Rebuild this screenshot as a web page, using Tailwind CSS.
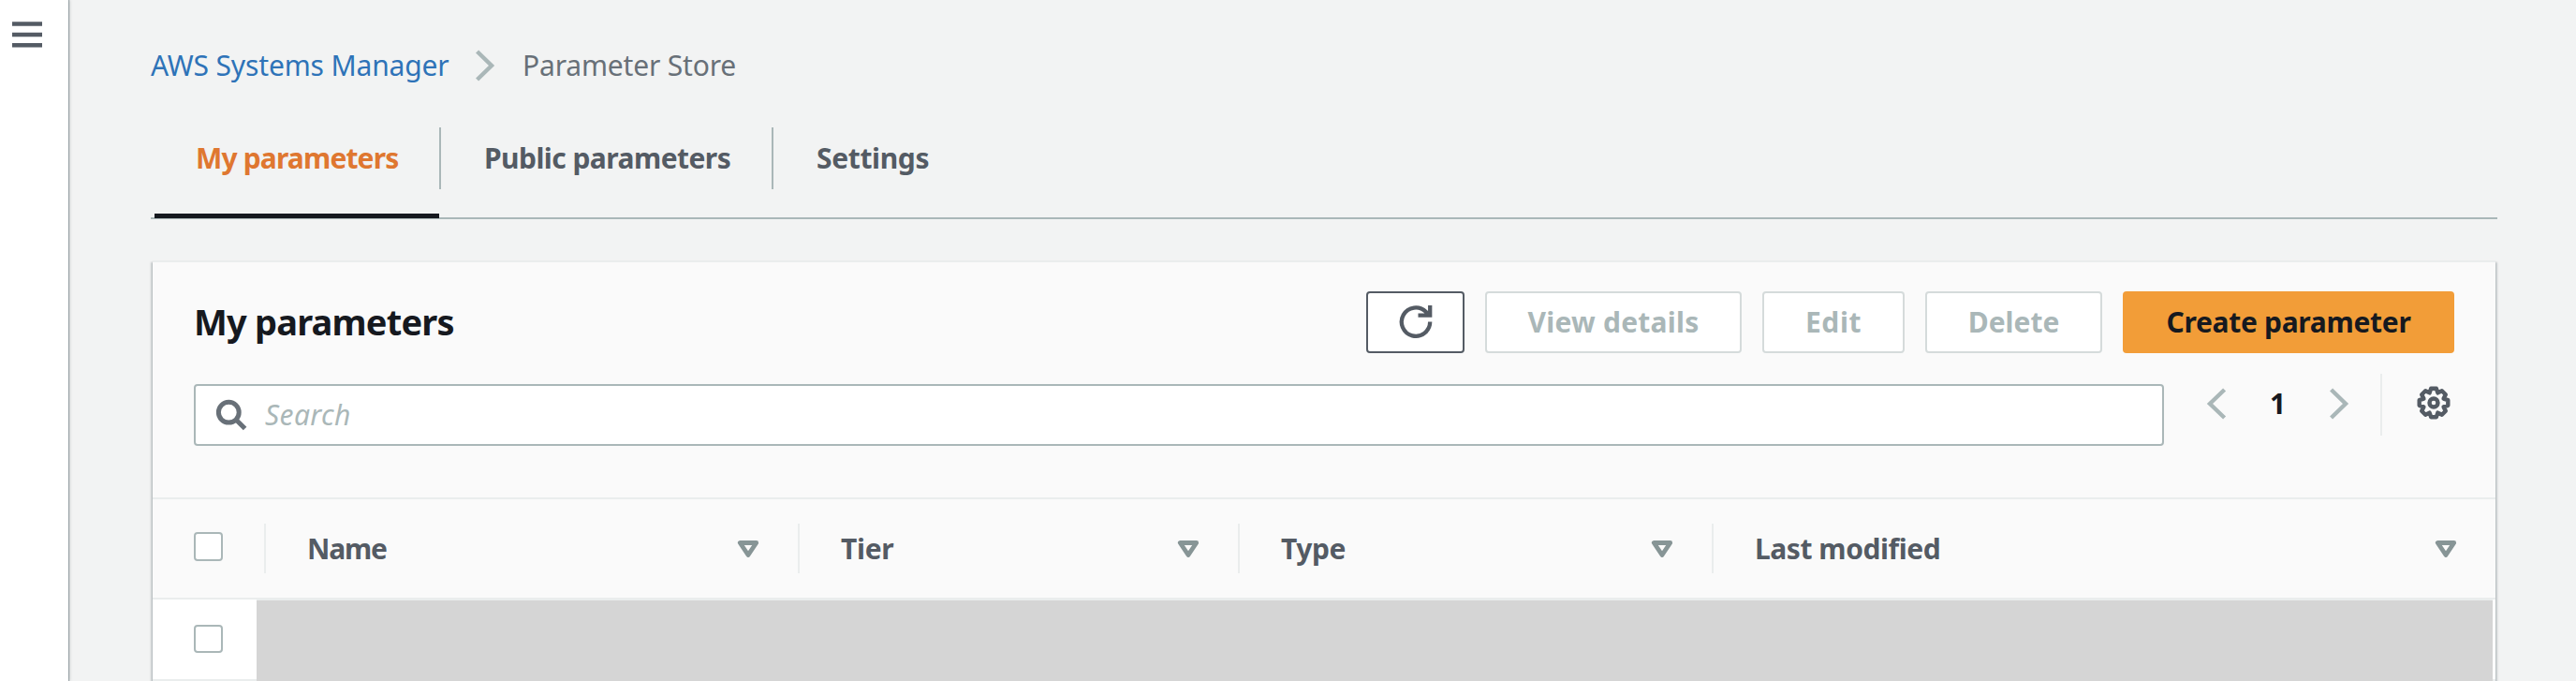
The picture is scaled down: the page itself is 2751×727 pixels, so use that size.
<!DOCTYPE html>
<html lang="en">
<head>
    <meta charset="UTF-8">
    <meta name="viewport" content="width=device-width, initial-scale=1.0">
    <title>Parameter Store</title>
    <script src="https://cdn.jsdelivr.net/npm/@tailwindcss/browser@4"></script>
</head>
<body class="flex h-screen overflow-hidden bg-[#f2f3f3] font-['Noto_Sans','Open_Sans',sans-serif] text-[30px] leading-10 whitespace-nowrap text-[#545b64]">
    <!-- collapsed side nav -->
    <aside class="z-10 w-[73px] shrink-0 bg-white pt-[23px] pl-[13px] shadow-[1px_0_1px_rgba(0,28,36,0.3),2px_0_3px_rgba(0,28,36,0.12)]">
        <button class="block" aria-label="Open navigation">
            <svg class="block" width="32" height="28" viewBox="0 0 32 28" fill="none" stroke="#545b64" stroke-width="4.6"><path d="M0 2.5h32M0 14h32M0 25.3h32"/></svg>
        </button>
    </aside>

    <main class="flex-1 pl-[88px]">
        <nav class="flex h-[136px] items-start pt-[50px]">
            <a href="#" class="w-[347px] tracking-[-0.15px] text-[#2e73b8]">AWS Systems Manager</a>
            <svg class="mt-[3px] block" width="22" height="34" viewBox="0 0 22 34" fill="none" stroke="#aab7b8" stroke-width="4.4"><path d="M1.6 2l15.4 15L1.6 32"/></svg>
            <span class="ml-[28px] tracking-[-0.17px] text-[#687078]">Parameter Store</span>
        </nav>

        <div class="flex h-[98px] w-[2506px] border-b-2 border-[#aab7b8] font-bold">
            <div class="ml-1 h-[97px] w-[304px] border-b-5 border-[#16191f] pt-[13px] pl-[44px] tracking-[-0.85px] text-[#df7730]">My parameters</div>
            <div class="h-[66px] w-[355px] border-l-2 border-[#aab7b8] pt-[13px] pl-[46px] tracking-[-0.55px]">Public parameters</div>
            <div class="h-[66px] border-l-2 border-[#aab7b8] pt-[13px] pl-[46px] tracking-[-0.35px]">Settings</div>
        </div>

        <section class="mt-[44px] ml-[2px] h-[460px] w-[2502px] border-t-2 border-[#eaeded] bg-[#fafafa] shadow-[0_2px_2px_rgba(0,28,36,0.3),2px_2px_2px_rgba(0,28,36,0.15),-2px_2px_2px_rgba(0,28,36,0.15)]">
            <div class="flex h-[99px] items-start gap-[22px] pt-[31px] pr-[44px] pl-[44px] font-bold">
                <h2 class="mr-auto pt-[12px] text-[38px] leading-10 tracking-[-0.8px] text-[#16191f]">My parameters</h2>
                <button class="flex h-[66px] w-[105px] items-center justify-center rounded-sm border-2 border-[#545b64] bg-white" aria-label="Refresh">
                    <svg class="block" width="36" height="36" viewBox="0 0 36 36" fill="none" stroke="#545b64" stroke-width="4.3"><path d="M33.2 17.5A15.2 15.2 0 1 1 28.7 6.8L31.5 10M33.2 0v10.7H20.5"/></svg>
                </button>
                <button class="h-[66px] w-[274px] rounded-sm border-2 border-[#d5dbdb] bg-white tracking-[0.25px] text-[#aab7b8]">View details</button>
                <button class="h-[66px] w-[152px] rounded-sm border-2 border-[#d5dbdb] bg-white tracking-[0.6px] text-[#aab7b8]">Edit</button>
                <button class="h-[66px] w-[189px] rounded-sm border-2 border-[#d5dbdb] bg-white text-[#aab7b8]">Delete</button>
                <button class="h-[66px] w-[354px] rounded-sm bg-[#f29d38] tracking-[-0.3px] text-[#16191f]">Create parameter</button>
            </div>

            <div class="flex h-[152px] items-start pl-[44px]">
                <div class="mt-[31px] flex h-[66px] w-[2104px] items-center rounded-sm border-2 border-[#aab7b8] bg-white pl-[21px]">
                    <svg class="block" width="36" height="36" viewBox="0 0 36 36" fill="none" stroke="#687078" stroke-width="5"><circle cx="14.3" cy="15.2" r="10.9"/><path d="M22 23l9.6 9.6"/></svg>
                    <span class="ml-[17px] tracking-[0.4px] text-[#aab7b8] italic">Search</span>
                </div>
                <svg class="mt-[35px] ml-[45px] block" width="22" height="34" viewBox="0 0 22 34" fill="none" stroke="#aab7b8" stroke-width="4.4"><path d="M19.6 2L4 17l15.6 15"/></svg>
                <span class="mt-[32px] ml-[46px] w-[18px] font-bold text-[#16191f]">1</span>
                <svg class="mt-[35px] ml-[46px] block" width="22" height="34" viewBox="0 0 22 34" fill="none" stroke="#aab7b8" stroke-width="4.4"><path d="M1.6 2l15.4 15L1.6 32"/></svg>
                <div class="mt-5 ml-[32px] h-[66px] w-[2px] bg-[#eaeded]"></div>
                <svg class="mt-[33px] ml-[37px] block" width="36" height="36" viewBox="0 0 36 36" fill="none" stroke="#545b64" stroke-width="4.4" stroke-linejoin="round"><circle cx="18" cy="18" r="4.5"/><path d="M15.2 2.7L20.8 2.7 22.4 7.4 26.8 5.2 30.8 9.2 28.6 13.6 33.3 15.2 33.3 20.8 28.6 22.4 30.8 26.8 26.8 30.8 22.4 28.6 20.8 33.3 15.2 33.3 13.6 28.6 9.2 30.8 5.2 26.8 7.4 22.4 2.7 20.8 2.7 15.2 7.4 13.6 5.2 9.2 9.2 5.2 13.6 7.4z"/></svg>
            </div>

            <div class="flex h-[109px] items-center border-t-2 border-b-2 border-[#eaeded] font-bold">
                <div class="w-[119px] pl-[44px]"><div class="mb-1 h-[31px] w-[31px] rounded-sm border-2 border-[#aab7b8] bg-white"></div></div>
                <div class="flex h-[53px] w-[570px] items-center border-l-2 border-[#eaeded] pl-[44px]">
                    <span class="tracking-[-1.2px]">Name</span>
                    <svg class="mr-[41px] ml-auto block" width="24" height="20" viewBox="0 0 24 20" fill="none" stroke="#879596" stroke-width="4.8" stroke-linejoin="round"><path d="M3.3 3.5h17.4L12 16.5z"/></svg>
                </div>
                <div class="flex h-[53px] w-[470px] items-center border-l-2 border-[#eaeded] pl-[44px]">
                    <span class="tracking-[-0.3px]">Tier</span>
                    <svg class="mr-[41px] ml-auto block" width="24" height="20" viewBox="0 0 24 20" fill="none" stroke="#879596" stroke-width="4.8" stroke-linejoin="round"><path d="M3.3 3.5h17.4L12 16.5z"/></svg>
                </div>
                <div class="flex h-[53px] w-[506px] items-center border-l-2 border-[#eaeded] pl-[44px]">
                    <span class="tracking-[-0.4px]">Type</span>
                    <svg class="mr-[41px] ml-auto block" width="24" height="20" viewBox="0 0 24 20" fill="none" stroke="#879596" stroke-width="4.8" stroke-linejoin="round"><path d="M3.3 3.5h17.4L12 16.5z"/></svg>
                </div>
                <div class="flex h-[53px] flex-1 items-center border-l-2 border-[#eaeded] pl-[44px]">
                    <span class="tracking-[-0.45px]">Last modified</span>
                    <svg class="mr-[41px] ml-auto block" width="24" height="20" viewBox="0 0 24 20" fill="none" stroke="#879596" stroke-width="4.8" stroke-linejoin="round"><path d="M3.3 3.5h17.4L12 16.5z"/></svg>
                </div>
            </div>

            <div class="flex h-[87px] border-b-2 border-[#eaeded] bg-white">
                <div class="w-[111px] pt-[27px] pl-[44px]"><div class="h-[30px] w-[31px] rounded-sm border-2 border-[#aab7b8] bg-white"></div></div>
                <div class="h-[100px] w-[2388px] border-t border-[#eaeded] bg-[#d5d5d5]"></div>
            </div>
        </section>
    </main>
</body>
</html>
